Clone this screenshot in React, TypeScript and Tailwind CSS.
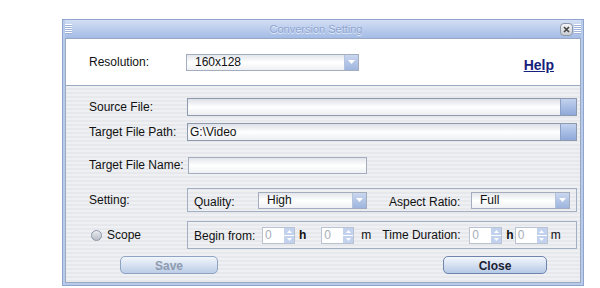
import React from 'react';

const font = { fontFamily: '"Liberation Sans", Arial, sans-serif' };

const Arrow: React.FC = () => (
  <svg width="7" height="4" viewBox="0 0 7 4">
    <path d="M0 0 H7 L3.5 4 Z" fill="#ffffff" />
  </svg>
);

// combo box with a blue arrow button on the right
const Combo: React.FC<{ value: string; className: string }> = ({ value, className }) => (
  <div className={`flex h-[17px] border border-[#a3adbd] bg-gradient-to-b from-[#e3e6eb] via-white to-[#eef0f3] ${className}`}>
    <div className="flex-1 pl-[8px] text-[12px] leading-[15px] text-[#111]">{value}</div>
    <div className="flex w-[14px] items-center justify-center border-l border-[#b3c3de] bg-gradient-to-b from-[#cad7ef] to-[#9eb5de]">
      <Arrow />
    </div>
  </div>
);

// path field with a small browse button
const PathField: React.FC<{ value?: string }> = ({ value }) => (
  <div className="flex h-[18px] w-[390px] border border-[#8c99ae] bg-gradient-to-b from-[#dde0e6] via-white to-[#eceef1]">
    <div className="flex-1 pl-[2px] text-[12px] leading-[16px] text-[#111]">{value}</div>
    <div className="w-[16px] border-l border-[#8c9fc4] bg-gradient-to-b from-[#c3d2ee] to-[#8fa9da]" />
  </div>
);

const Spinner: React.FC<{ className?: string }> = ({ className }) => (
  <div className={`flex h-[17px] w-[33px] border border-[#b9c3d2] bg-white ${className ?? ''}`}>
    <div className="flex-1 pl-[2px] text-[12px] leading-[15px] text-[#a7aeb8]">0</div>
    <div className="flex w-[10px] flex-col bg-[#c2d2ee]">
      <div className="flex flex-1 items-center justify-center border-b border-white">
        <svg width="5" height="3" viewBox="0 0 5 3"><path d="M0 3 L2.5 0 L5 3 Z" fill="#fff" /></svg>
      </div>
      <div className="flex flex-1 items-center justify-center">
        <svg width="5" height="3" viewBox="0 0 5 3"><path d="M0 0 H5 L2.5 3 Z" fill="#fff" /></svg>
      </div>
    </div>
  </div>
);

const Grip: React.FC = () => (
  <div className="h-[10px] w-[7px] bg-[repeating-linear-gradient(180deg,#ffffff_0px,#ffffff_1px,#9fb3da_1px,#9fb3da_2px)]" />
);

export default function App() {
  return (
    <div className="h-[288px] w-[600px] bg-white pl-[62px] pt-[19px]" style={font}>
      <div className="w-[522px] border border-[#8fa5cd] bg-[#b9cbea] px-[2px] pb-[2px]">
        {/* title bar */}
        <div className="flex h-[18px] items-center bg-gradient-to-b from-[#d3def3] to-[#a4bce6]">
          <Grip />
          <div className="flex-1 text-center text-[11px] text-[#8ea4d0] [text-shadow:0_1px_0_#e6eefa]">
            Conversion Setting
          </div>
          <div className="mr-[1px] flex h-[13px] w-[13px] items-center justify-center rounded-[4px] border border-[#8e97a6] bg-gradient-to-b from-[#f4f5f7] to-[#c9cdd4]">
            <svg width="7" height="7" viewBox="0 0 7 7">
              <path d="M1 1 L6 6 M6 1 L1 6" stroke="#444" strokeWidth="1.6" />
            </svg>
          </div>
          <Grip />
        </div>

        {/* resolution header */}
        <div className="flex h-[48px] items-center border border-[#9aa9c2] bg-white pl-[23px] pr-[26px]">
          <div className="w-[97px] text-[12px] text-[#111]">Resolution:</div>
          <Combo value="160x128" className="w-[173px]" />
          <div className="flex-1" />
          <div className="mt-[6px] text-[14px] font-bold text-[#14207a] underline">Help</div>
        </div>

        {/* main settings */}
        <div className="h-[197px] border border-t-0 border-[#9aa9c2] bg-[repeating-linear-gradient(180deg,#eef0f3_0px,#eef0f3_2px,#e6e8ec_2px,#e6e8ec_4px)] pl-[23px] pt-[12px] text-[12px] text-[#111]">
          <div className="flex items-center">
            <div className="w-[98px]">Source File:</div>
            <PathField />
          </div>
          <div className="mt-[7px] flex items-center">
            <div className="w-[98px]">Target File Path:</div>
            <PathField value="G:\Video" />
          </div>
          <div className="mt-[15px] flex items-center">
            <div className="w-[99px]">Target File Name:</div>
            <div className="h-[17px] w-[179px] border border-[#a3adbd] bg-gradient-to-b from-[#e3e6eb] via-white to-[#eef0f3]" />
          </div>

          <div className="mt-[14px] flex items-center">
            <div className="w-[98px]">Setting:</div>
            <div className="flex h-[24px] w-[390px] items-center border border-[#a3afc3] pl-[6px]">
              <div className="mt-[3px] w-[64px]">Quality:</div>
              <Combo value="High" className="w-[109px]" />
              <div className="mt-[3px] ml-[22px] w-[82px]">Aspect Ratio:</div>
              <Combo value="Full" className="w-[99px]" />
            </div>
          </div>

          <div className="mt-[9px] flex items-center">
            <div className="flex w-[98px] items-center pl-[2px]">
              <div className="h-[11px] w-[11px] rounded-full border border-[#8c96a6] bg-gradient-to-b from-[#e9ebef] to-[#b9bec8]" />
              <span className="ml-[5px]">Scope</span>
            </div>
            <div className="flex h-[28px] w-[390px] items-center border border-[#a3afc3] pl-[6px]">
              <div className="mt-[2px] w-[68px]">Begin from:</div>
              <Spinner />
              <span className="ml-[4px] font-bold">h</span>
              <Spinner className="ml-[15px]" />
              <span className="ml-[7px]">m</span>
              <span className="ml-[11px] w-[87px]">Time Duration:</span>
              <Spinner />
              <span className="ml-[4px] font-bold">h</span>
              <Spinner className="ml-[1px]" />
              <span className="ml-[3px]">m</span>
            </div>
          </div>

          <div className="mt-[7px] flex">
            <button className="ml-[31px] h-[18px] w-[98px] rounded-[5px] border border-[#8ea2c4] bg-gradient-to-b from-[#f2f6fb] to-[#bccde6] text-[12px] font-bold text-[#8c9aae]">
              Save
            </button>
            <button className="ml-[225px] h-[18px] w-[104px] rounded-[5px] border border-[#6d84ad] bg-gradient-to-b from-[#f4f7fc] to-[#b6c9e6] text-[12px] font-bold text-[#1a2233]">
              Close
            </button>
          </div>
        </div>
      </div>
    </div>
  );
}
